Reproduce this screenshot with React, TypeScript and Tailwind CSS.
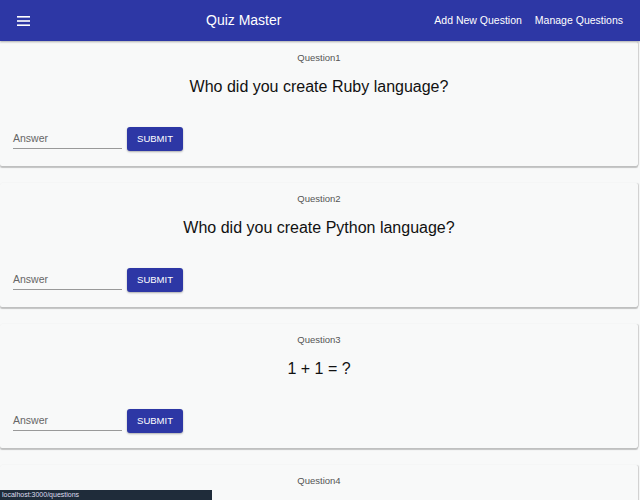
import React from 'react';

const QUESTIONS = [
  { id: 1, text: 'Who did you create Ruby language?' },
  { id: 2, text: 'Who did you create Python language?' },
  { id: 3, text: '1 + 1 = ?' },
  { id: 4, text: 'What is React?' },
];

const QuestionCard: React.FC<{ id: number; text: string }> = ({ id, text }) => (
  <div className="bg-[#f8f9f9] h-[124px] mb-[17px] mr-[2px] shadow-[0_1.5px_1px_rgba(0,0,0,0.22),1px_0_1px_rgba(0,0,0,0.15)] rounded-[2px] flex flex-col items-center">
    <p className="mt-[10px] text-[9.5px] leading-[11px] text-[#555]">Question{id}</p>
    <h2 className="mt-[14px] text-[16px] leading-[20px] text-[#111]">{text}</h2>
    <div className="self-start flex items-end gap-[5px] ml-[13px] mt-[30px]">
      <div className="w-[109px] border-b border-[#999] pb-[3px] mb-[2px] text-[10.5px] leading-[13px] text-[#666]">
        Answer
      </div>
      <button className="h-[24px] w-[56px] bg-[#2d37a5] text-white text-[9.5px] rounded-[3px] shadow-[0_1px_2px_rgba(0,0,0,0.3)] uppercase">
        Submit
      </button>
    </div>
  </div>
);

export default function App() {
  return (
    <div className="relative w-[640px] h-[500px] overflow-hidden bg-[#f8f9f9] font-['Liberation_Sans',Arial,sans-serif]">
      <header className="h-[41px] bg-[#2d37a5] flex items-center text-white shadow-[0_1px_2px_rgba(0,0,0,0.3)] relative z-10">
        <svg className="ml-[17px] w-[13px] h-[10px]" viewBox="0 0 13 10" fill="white">
          <rect x="0" y="0" width="13" height="1.6" />
          <rect x="0" y="4.2" width="13" height="1.6" />
          <rect x="0" y="8.4" width="13" height="1.6" />
        </svg>
        <h1 className="ml-[176px] text-[14px]">Quiz Master</h1>
        <nav className="ml-auto mr-[17px] flex gap-[13px] text-[10.5px]">
          <span>Add New Question</span>
          <span>Manage Questions</span>
        </nav>
      </header>
      <main className="pt-[1px]">
        {QUESTIONS.map(q => (
          <QuestionCard key={q.id} id={q.id} text={q.text} />
        ))}
      </main>
      <div className="absolute left-0 bottom-0 w-[212px] h-[10px] bg-[#1f2c3a] text-[7px] leading-[10px] text-[#dde] pl-[2px]">
        localhost:3000/questions
      </div>
    </div>
  );
}
